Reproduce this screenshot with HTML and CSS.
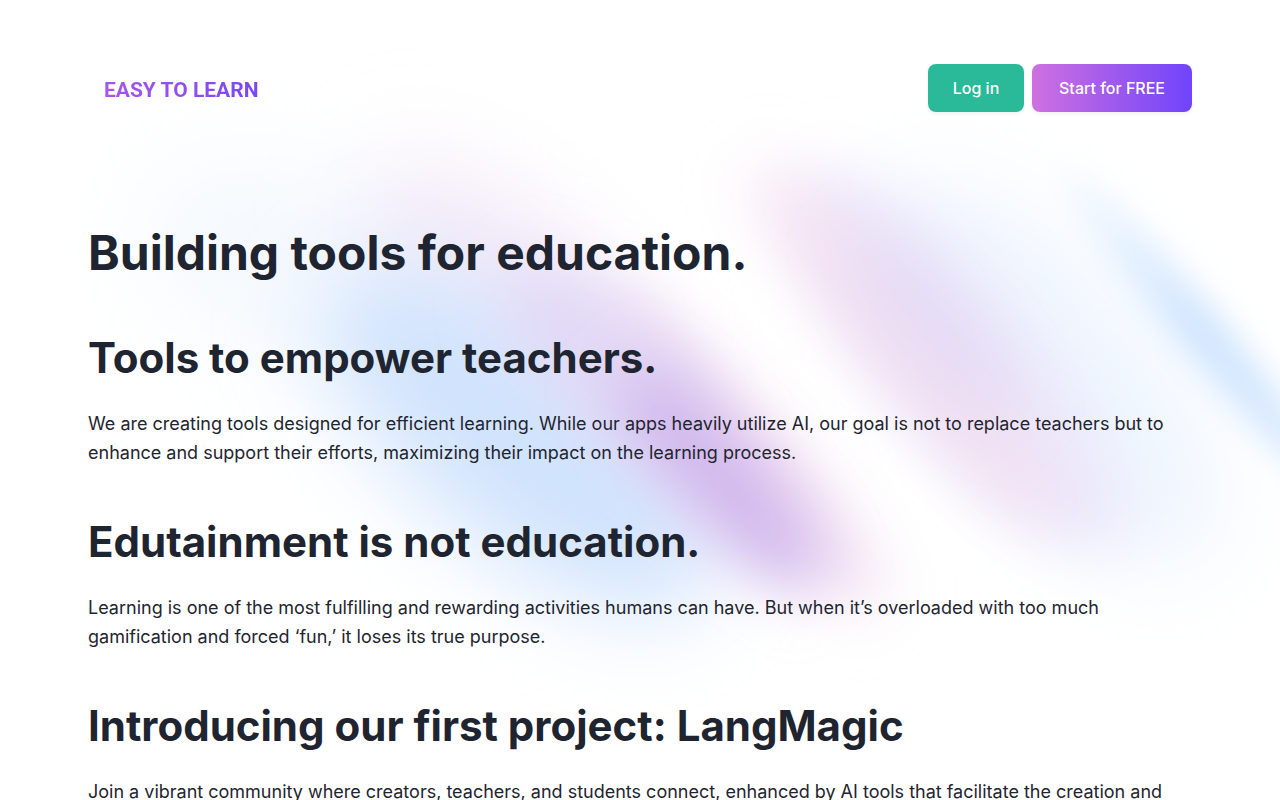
FILE: index.html
```html
<!DOCTYPE html>
<html lang="en">
<head>
  <meta charset="UTF-8" />
  <meta name="viewport" content="width=device-width, initial-scale=1.0" />
  <title>Easy to Learn</title>
  <link rel="stylesheet" href="styles.css">
</head>
<body>
  <svg class="backdrop" viewBox="0 0 1280 800" preserveAspectRatio="xMidYMin slice" aria-hidden="true">
    <defs>
      <filter id="soft" x="-100%" y="-100%" width="300%" height="300%"><feGaussianBlur stdDeviation="46" /></filter>
      <filter id="medium" x="-100%" y="-150%" width="300%" height="400%"><feGaussianBlur stdDeviation="30" /></filter>
      <filter id="fine" x="-100%" y="-200%" width="300%" height="500%"><feGaussianBlur stdDeviation="16" /></filter>
      <linearGradient id="streak">
        <stop offset="0" stop-color="#d5e8fe" stop-opacity="0.2" />
        <stop offset="0.5" stop-color="#d0e5fe" />
        <stop offset="1" stop-color="#d8eafe" />
      </linearGradient>
    </defs>
    <!-- left blob -->
    <ellipse cx="310" cy="270" rx="180" ry="100" transform="rotate(20 310 270)" fill="#f5f9fe" filter="url(#soft)" />
    <ellipse cx="495" cy="265" rx="150" ry="65" transform="rotate(35 495 265)" fill="#f3e8f8" filter="url(#soft)" />
    <ellipse cx="520" cy="440" rx="240" ry="105" transform="rotate(40 520 440)" fill="#d0e3fd" filter="url(#soft)" />
    <ellipse cx="740" cy="450" rx="210" ry="42" transform="rotate(48 740 450)" fill="#f3dff2" filter="url(#medium)" />
    <ellipse cx="610" cy="365" rx="130" ry="60" transform="rotate(42 610 365)" fill="#e0d5f5" fill-opacity="0.8" filter="url(#medium)" />
    <ellipse cx="720" cy="480" rx="145" ry="42" transform="rotate(48 720 480)" fill="#cfb6ec" filter="url(#medium)" />
    <!-- middle blob -->
    <ellipse cx="1050" cy="375" rx="240" ry="100" transform="rotate(50 1050 375)" fill="#eef5fe" filter="url(#soft)" />
    <ellipse cx="960" cy="360" rx="240" ry="70" transform="rotate(50 960 360)" fill="#ebe7fa" filter="url(#medium)" />
    <ellipse cx="905" cy="345" rx="235" ry="38" transform="rotate(50 905 345)" fill="#f5deF1" fill-opacity="0.9" filter="url(#medium)" />
    <ellipse cx="935" cy="325" rx="120" ry="28" transform="rotate(50 935 325)" fill="#ddd6f5" fill-opacity="0.7" filter="url(#medium)" />
    <!-- right streak -->
    <ellipse cx="1195" cy="325" rx="210" ry="24" transform="rotate(50 1195 325)" fill="url(#streak)" filter="url(#fine)" />
  </svg>

  <div class="page">
    <header class="navbar">
      <a href="#" class="logo">EASY TO LEARN</a>
      <div class="actions">
        <button type="button" class="btn btn-login">Log in</button>
        <button type="button" class="btn btn-start">Start for FREE</button>
      </div>
    </header>

    <main class="content">
      <h1>Building tools for education.</h1>
      <h2>Tools to empower teachers.</h2>
      <p>We are creating tools designed for efficient learning. While our apps heavily utilize AI, our goal is not to replace teachers but to enhance and support their efforts, maximizing their impact on the learning process.</p>
      <h2>Edutainment is not education.</h2>
      <p>Learning is one of the most fulfilling and rewarding activities humans can have. But when it’s overloaded with too much gamification and forced ‘fun,’ it loses its true purpose.</p>
      <h2>Introducing our first project: LangMagic</h2>
      <p>Join a vibrant community where creators, teachers, and students connect, enhanced by AI tools that facilitate the creation and</p>
    </main>
  </div>
</body>
</html>
```
FILE: styles.css
```css
* {
  box-sizing: border-box;
}
body {
  margin: 0;
  position: relative;
  background: #fff;
  color: #1f2530;
  font-family: Inter, "Liberation Sans", sans-serif;
}
.backdrop {
  position: absolute;
  top: 0;
  left: 0;
  width: 100%;
  height: 100vh;
  z-index: -1;
}
.page {
  max-width: 1152px;
  margin: 0 auto;
  padding: 56px 24px;
}
.navbar {
  display: flex;
  align-items: center;
  justify-content: space-between;
  min-height: 64px;
}
.logo {
  margin-left: 16px;
  padding-top: 4px;
  font-family: Roboto, sans-serif;
  font-size: 21px;
  font-weight: 700;
  text-decoration: none;
  color: transparent;
  background: linear-gradient(to right, #a855f0, #7847f5);
  -webkit-background-clip: text;
  background-clip: text;
}
.actions {
  display: flex;
  gap: 8px;
}
.btn {
  min-width: 96px;
  height: 48px;
  padding: 0 24px;
  border: 0;
  border-radius: 8px;
  color: #fff;
  font-family: inherit;
  font-size: 16px;
  font-weight: 500;
  cursor: pointer;
  box-shadow: 0 2px 4px rgba(0, 0, 0, 0.06);
}
.btn-login {
  background: #2aba9a;
}
.btn-start {
  min-width: 160px;
  background: linear-gradient(to right, #cf70e0, #7044fb);
}
.content {
  padding-top: 104px;
}
h1, h2 {
  margin: 0;
  font-weight: 700;
}
h1 {
  font-size: 48px;
  line-height: 58px;
}
h2 {
  margin: 49px 0 25px;
  font-size: 42px;
  line-height: 52px;
}
h1 + h2 {
  margin-top: 50px;
}
p {
  margin: 0;
  font-size: 18px;
  line-height: 29px;
}
```
